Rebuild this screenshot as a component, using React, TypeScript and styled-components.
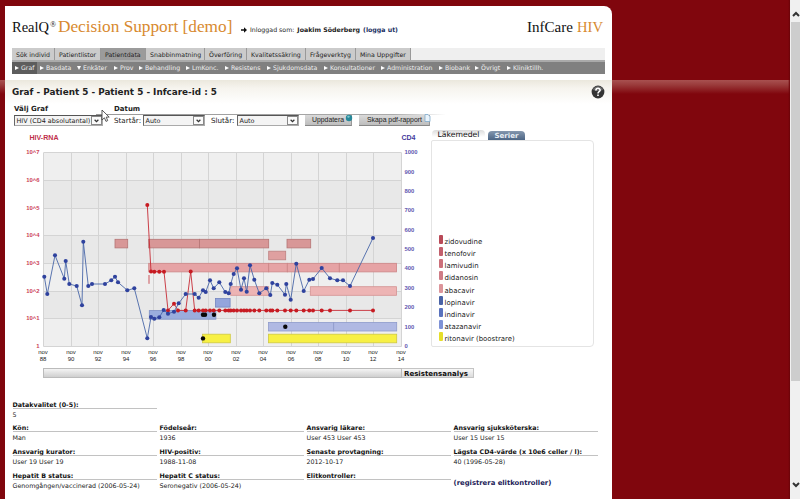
import React from "react";
import styled, { createGlobalStyle, css } from "styled-components";

const Global = createGlobalStyle`
  *, *::before, *::after { box-sizing: border-box; }
  html, body { margin: 0; padding: 0; overflow: hidden; }
  body { font-family: "DejaVu Sans", Verdana, sans-serif; color: #222; }
`;

const Window = styled.div`
  display: flex;
  width: 800px;
  height: 499px;
  overflow: hidden;
  background: #80060d;
`;

const Desk = styled.div`
  flex: 0 0 790px;
  padding: 6px 0 0 5px;
  background:
    linear-gradient(90deg, transparent 788px, #6a0308 790px),
    linear-gradient(#a85150, #9a3b3b 35%, #80060d) 0 80px / 100% 14px no-repeat,
    #80060d;
`;

const Sheet = styled.main`
  width: 607px;
  height: 500px;
  padding: 0 7px;
  border-top-right-radius: 8px;
  background: linear-gradient(#ebe8dd, #f6f4ee 8px, #ffffff 24px) 0 74px / 100% 24px no-repeat, #fff;
`;

const Header = styled.header`
  display: flex;
  height: 42px;
  padding-right: 2px;
  white-space: nowrap;
`;

const Brand = styled.div<{ $size: number; $color?: string; $width: number; $top?: number }>`
  flex: 0 0 ${(p) => p.$width}px;
  padding-top: ${(p) => p.$top ?? 11}px;
  font: ${(p) => p.$size}px/20px "Liberation Serif", serif;
  color: ${(p) => p.$color ?? "#111"};
`;

const Session = styled.div`
  flex: 1;
  display: flex;
  align-items: center;
  gap: 3px;
  height: 10px;
  margin: 19px 0 0 7px;
  font-size: 6.25px;
  line-height: 10px;
  svg { display: block; }
`;

const Link = styled.a`
  color: #1a2f63;
  font-weight: bold;
`;

const TabBar = styled.nav`
  display: flex;
  height: 14px;
  background: #efefef;
  border-bottom: 2px solid #aaa;
`;

const Tab = styled.a<{ $width: number; $active?: boolean }>`
  flex: 0 0 ${(p) => p.$width}px;
  height: 12px;
  padding-left: 4px;
  border-right: 1px solid #999;
  background: ${(p) => (p.$active ? "#9b9b9b" : "#cbcbcb")};
  font-size: 6.23px;
  line-height: 13px;
  color: #222;
  white-space: nowrap;
`;

const SubBar = styled.nav`
  display: flex;
  height: 12px;
  margin-bottom: 11px;
  background: #808080;
`;

const SubItem = styled.a<{ $width: number; $active?: boolean; $open?: boolean }>`
  flex: 0 0 ${(p) => p.$width}px;
  display: flex;
  align-items: center;
  gap: 2px;
  padding-left: 3px;
  background: ${(p) => (p.$active ? "#5d5d5d" : "transparent")};
  font-size: 6.22px;
  line-height: 12px;
  color: #f0f0f0;
  white-space: nowrap;
  &::before {
    content: "";
    border: 2px solid transparent;
    ${(p) =>
      p.$open
        ? css`border-width: 4px 2px 0; border-top-color: #fff;`
        : css`border-width: 2px 0 2px 4px; border-left-color: #fff;`}
  }
`;

const TitleRow = styled.div`
  display: flex;
  justify-content: space-between;
  height: 16px;
`;

const Title = styled.h1`
  margin: 0;
  font-size: 8.83px;
  line-height: 15px;
  white-space: nowrap;
`;

const Filters = styled.form`
  position: relative;
  display: grid;
  grid-template-columns: 100px 1fr;
  grid-template-rows: 10px 13px;
  height: 23px;
  margin: 3px 0 0 2px;
`;

const Rule = styled.div`
  position: absolute;
  left: 82px;
  top: 10px;
  width: 350px;
  height: 1px;
  background: linear-gradient(90deg, #999, #aaa 85%, transparent);
`;

const FilterLabel = styled.strong`
  font-size: 7px;
  line-height: 10px;
`;

const Controls = styled.div`
  display: flex;
  align-items: center;
  height: 11px;
  margin-top: 1px;
  font-size: 7.15px;
  line-height: 11px;
  white-space: nowrap;
`;

const ControlLabel = styled.label<{ $width: number }>`
  flex: 0 0 ${(p) => p.$width}px;
`;

const Select = styled.div<{ $width: number; $after?: number }>`
  flex: 0 0 ${(p) => p.$width}px;
  display: flex;
  justify-content: space-between;
  height: 11px;
  margin-right: ${(p) => p.$after ?? 0}px;
  padding-left: 1.5px;
  border: 1px solid #aaa;
  border-top-color: #555;
  border-left-color: #666;
  background: #f4f4f4;
  font-size: 6.45px;
  line-height: 10px;
`;

const Drop = styled.span`
  display: flex;
  align-items: center;
  justify-content: center;
  width: 11px;
  height: 9px;
  border: 1px solid #888;
  background: #fafafa;
`;

const Button = styled.div<{ $width: number; $after?: number; $pad: number }>`
  position: relative;
  flex: 0 0 ${(p) => p.$width}px;
  height: 11px;
  margin-right: ${(p) => p.$after ?? 0}px;
  padding-left: ${(p) => p.$pad}px;
  border-bottom: 1px solid #888;
  border-right: 1px solid #999;
  background: linear-gradient(#dadada, #bdbdbd);
  font: 6.86px/10px "Liberation Sans", Arial, sans-serif;
  svg { position: absolute; right: -2px; top: -1px; }
`;

const Pointer = styled.svg`
  position: absolute;
  left: 87px;
  top: 5px;
`;

const Charts = styled.section`
  display: flex;
  height: 235px;
  margin: 3px 0 0 8px;
`;

const Legend = styled.aside`
  width: 163px;
  margin-left: 1px;
`;

const LegendTabs = styled.div`
  display: flex;
  align-items: flex-end;
  gap: 3px;
  height: 10px;
  padding-left: 1px;
`;

const LegendTab = styled.div<{ $width: number; $active?: boolean }>`
  width: ${(p) => p.$width}px;
  height: ${(p) => (p.$active ? 10 : 9)}px;
  border-radius: 4px 4px 0 0;
  text-align: center;
  white-space: nowrap;
  ${(p) =>
    p.$active
      ? css`background: linear-gradient(#dcdcdc, #fff 70%); font-size: 7.71px; line-height: 10px; color: #111;`
      : css`background: linear-gradient(#8497ae, #4c6585); font-size: 7.05px; font-weight: bold; line-height: 9px; color: #e8eef5;`}
`;

const LegendBox = styled.ul`
  display: flex;
  flex-direction: column;
  justify-content: flex-end;
  height: 207px;
  margin: 0;
  padding: 0 0 2px 7px;
  border: 1px solid #e4e4e4;
  border-radius: 2px 4px 4px 2px;
  list-style: none;
`;

const LegendItem = styled.li<{ $color: string }>`
  display: flex;
  gap: 2px;
  height: 12.1px;
  font-size: 6.95px;
  line-height: 15px;
  white-space: nowrap;
  &::before {
    content: "";
    width: 3.5px;
    height: 9px;
    border-radius: 1px;
    background: ${(p) => p.$color};
  }
`;

const Resistance = styled.div`
  display: flex;
  height: 10px;
  margin: 3px 0 0 31px;
`;

const Track = styled.div`
  width: 359px;
  border: 1px solid #bbb;
  background: linear-gradient(#f4f4f4, #cfcfcf);
`;

const ResistanceButton = styled.div`
  width: 72px;
  padding-left: 2px;
  border: 1px solid #c4c4c4;
  border-left: 0;
  background: linear-gradient(#f8f8f8, #dcdcdc);
  font-size: 7.04px;
  font-weight: bold;
  line-height: 9px;
  color: #111;
`;

const Facts = styled.dl`
  display: grid;
  grid-template-columns: repeat(4, 144px);
  grid-auto-rows: 23.8px;
  column-gap: 3px;
  margin: 21.5px 0 0 0.5px;
`;

const Fact = styled.div<{ $alone?: boolean }>`
  font-size: 6.34px;
  white-space: nowrap;
  ${(p) => p.$alone && css`grid-column: 1 / -1; width: 144px;`}
  dt { height: 9px; border-bottom: 1px solid #c2c2c2; font-weight: bold; line-height: 9px; color: #111; }
  dd { margin: 0; line-height: 11px; }
`;

const Register = styled.a`
  padding-top: 7.5px;
  font-size: 6.85px;
  font-weight: bold;
  line-height: 10px;
  color: #221c58;
  white-space: nowrap;
`;

const Scrollbar = styled.div`
  flex: 0 0 10px;
  display: flex;
  flex-direction: column;
  align-items: center;
  padding: 10px 0 10px 1px;
  background: #f0f0f0;
  svg { flex: none; }
`;

const Thumb = styled.div`
  width: 9px;
  height: 359px;
  margin: 4px 0 auto;
  background: #cdcdcd;
`;

const tabs: [string, number][] = [
  ["Sök individ", 43], ["Patientlistor", 46], ["Patientdata", 45], ["Snabbinmatning", 59],
  ["Överföring", 42], ["Kvalitetssäkring", 59], ["Frågeverktyg", 50], ["Mina Uppgifter", 55],
];

const subItems: [string, number][] = [
  ["Graf", 25], ["Basdata", 37], ["Enkäter", 37], ["Prov", 25], ["Behandling", 47],
  ["LmKonc.", 39], ["Resistens", 42], ["Sjukdomsdata", 57], ["Konsultationer", 57],
  ["Administration", 58], ["Biobank", 36], ["Övrigt", 32], ["Kliniktillh.", 40],
];

const drugs: [string, string][] = [
  ["zidovudine", "#b94a58"], ["tenofovir", "#c25f6c"], ["lamivudin", "#cc6f79"],
  ["didanosin", "#cf7d86"], ["abacavir", "#dc959b"], ["lopinavir", "#4a63a6"],
  ["indinavir", "#5a72bd"], ["atazanavir", "#7f92d6"], ["ritonavir (boostrare)", "#e6de2a"],
];

const facts: [string, string][] = [
  ["Datakvalitet (0-5):", "5"],
  ["Kön:", "Man"], ["Födelseår:", "1936"], ["Ansvarig läkare:", "User 453 User 453"], ["Ansvarig sjuksköterska:", "User 15 User 15"],
  ["Ansvarig kurator:", "User 19 User 19"], ["HIV-positiv:", "1988-11-08"], ["Senaste provtagning:", "2012-10-17"], ["Lägsta CD4-värde (x 10e6 celler / l):", "40 (1996-05-28)"],
  ["Hepatit B status:", "Genomgången/vaccinerad (2006-05-24)"], ["Hepatit C status:", "Seronegativ (2006-05-24)"], ["Elitkontroller:", ""],
];

type Point = [number, number];

const cd4: Point[] = [
  [44.3, 276.7], [47.3, 294], [55, 255.3], [64.3, 278.7], [65.7, 261], [69.3, 284], [76.7, 286], [82, 305.3],
  [83.3, 241.7], [88.3, 286], [92, 284], [105, 284], [111.3, 280.3], [115, 276.7], [118, 282.3], [127.3, 290.3],
  [134.3, 288.3], [147.3, 338.3], [151, 317], [154.3, 318.7], [159.3, 317.3], [163.7, 310], [168, 313.7],
  [174, 311.7], [178.7, 303.3], [185.7, 294], [194.7, 294], [198.7, 297.7], [203, 290.3], [205.7, 292],
  [210, 280.3], [213.7, 288.3], [219.3, 282.3], [225.3, 292], [228.7, 293.3], [230.7, 284], [233.7, 274],
  [237, 268.3], [241, 289.7], [244, 278.3], [246.7, 291.7], [250, 265.3], [254.3, 279.7], [259.3, 293.3],
  [266.3, 288.3], [270.3, 295], [272.3, 283], [277.3, 284.7], [285, 294.7], [286.3, 284], [290.7, 299.7],
  [296.3, 263.7], [303.7, 291], [309.3, 279.7], [313, 279], [321.7, 268], [330, 278.3], [337.3, 280.3],
  [343, 280.3], [350, 286], [373, 238],
];

const flat = (xs: number[]): Point[] => xs.map((x) => [x, 310.4]);

const rna: Point[] = [
  [147.3, 205], [151, 271.5], [154.3, 271.7], [159.3, 271.7], [164, 271.7], [168, 310.4], [174, 303.7],
  [178, 310.4], [185.7, 310.4], [190.7, 271.5],
  ...flat([194.7, 198.7, 203, 205.7, 210, 213.7, 219.3, 225.3, 228.7, 230.7, 233.7, 237, 241, 244, 246.7, 250,
    254.3, 259.3, 266.3, 270.3, 272.3, 277.3, 285, 290.7, 296.3, 303.7, 309.3, 313, 321.7, 330, 350, 373]),
];

const marks: Point[] = [[203, 338.4], [203, 314.7], [205, 314.7], [214, 314.7], [285.3, 326.7]];

/* x, y, width, fill, stroke */
const courses: [number, number, number, string, string][] = [
  [115, 239.3, 12.7, "#d89797", "#b57575"], [148.7, 239.3, 50.7, "#d89797", "#b57575"],
  [199.4, 239.3, 69.3, "#d89797", "#b57575"], [287, 239.3, 23.7, "#d89797", "#b57575"],
  [268.7, 251.2, 17, "#dfa0a0", "#be8080"],
  [148.7, 263.3, 120, "#e6a3a5", "#cc8587"], [268.7, 263.3, 18.6, "#e6a3a5", "#cc8587"],
  [287.3, 263.3, 52, "#e6a3a5", "#cc8587"], [339.3, 263.3, 57.3, "#e6a3a5", "#cc8587"],
  [230.7, 286.7, 38, "#edb4b4", "#d49393"], [310.3, 286.7, 86.3, "#edb4b4", "#d49393"],
  [215.5, 298.5, 14.6, "#94a5dc", "#7385c0"], [149.3, 310.6, 66.6, "#9aaddd", "#7e90c4"],
  [268.5, 322.4, 65.2, "#b0b9e3", "#8f9bcb"], [333.7, 322.4, 63, "#b0b9e3", "#8f9bcb"],
  [202.5, 334.2, 27.8, "#f7f044", "#cfc842"], [268.5, 334.2, 128.2, "#f7f044", "#cfc842"],
];

const years = ["88", "90", "92", "94", "96", "98", "00", "02", "04", "06", "08", "10", "12", "14"];
const path = (pts: Point[]) => pts.map(([x, y]) => `${x},${y}`).join(" ");
const SANS = '"Liberation Sans", Arial, sans-serif';

function Chart() {
  return (
    <svg width="410" height="236" viewBox="20 130 410 236" fontFamily={SANS} fontSize="5.9">
      <text x="29.5" y="139.6" fontSize="7.05" fontWeight="bold" fill="#c0304a">HIV-RNA</text>
      <text x="401.5" y="139.6" fontSize="7" fontWeight="bold" fill="#43399c">CD4</text>
      {[0, 1, 2, 3, 4, 5, 6].map((i) => (
        <rect key={i} x="43.5" y={152.7 + i * 27.66} width="358" height="27.66" fill={i % 2 ? "#e8e8e8" : "#efefef"} />
      ))}
      {[0, 1, 2, 3, 4, 5, 6, 7].map((i) => (
        <g key={i}>
          <line x1="43.5" x2="401.5" y1={Math.floor(152.7 + i * 27.66) + 0.5} y2={Math.floor(152.7 + i * 27.66) + 0.5} stroke="#d4d4d4" />
          <text x="39.5" y={154.2 + i * 27.66} textAnchor="end" fontWeight="bold" fill="#cc4259">
            {i === 7 ? "1" : `10^${7 - i}`}
          </text>
        </g>
      ))}
      {years.map((year, i) => {
        const x = Math.floor(43.5 + i * 27.54);
        return (
          <g key={year} textAnchor="middle" fill="#222">
            <line x1={x + 0.5} x2={x + 0.5} y1="152.7" y2="346.5" stroke="#d4d4d4" />
            <text x={x} y="354" fontSize="6">nov</text>
            <text x={x} y="360.8" fontSize="6">{year}</text>
          </g>
        );
      })}
      {[1000, 900, 800, 700, 600, 500, 400, 300, 200, 100, 0].map((v, i) => (
        <text key={v} x="404.5" y={154.2 + i * 19.38} fontWeight="bold" fill="#6258b0">{v}</text>
      ))}
      {courses.map(([x, y, w, fill, stroke]) => (
        <rect key={`${x}-${y}`} x={x} y={y} width={w} height="8.6" fill={fill} stroke={stroke} strokeWidth=".8" />
      ))}
      <rect x="148.2" y="275" width="1.6" height="8.8" fill="#d98f93" />
      <polyline points={path(rna)} fill="none" stroke="#c62b35" strokeWidth=".9" />
      <polyline points={path(cd4)} fill="none" stroke="#4866a8" strokeWidth=".9" />
      {rna.map(([x, y]) => <circle key={x} cx={x} cy={y} r="2" fill="#c71b22" />)}
      {cd4.map(([x, y]) => <circle key={x} cx={x} cy={y} r="2.05" fill="#2f429e" />)}
      {marks.map(([x, y]) => <circle key={`${x}${y}`} cx={x} cy={y} r="2.2" fill="#080808" />)}
    </svg>
  );
}

const Chevron = ({ up, size = 5 }: { up?: boolean; size?: number }) => (
  <svg width={size} height={size === 5 ? 4 : 8} viewBox="0 0 8 6" fill="none" stroke="#333" strokeWidth="2">
    <path d={up ? "M1 5 4 2 7 5" : "M1 1 4 4 7 1"} />
  </svg>
);

export default function App() {
  return (
    <Window>
      <Global />
      <Desk>
        <Sheet>
          <Header>
            <Brand $size={14.48} $width={38}>RealQ</Brand>
            <Brand $size={8} $width={8} $top={9}>®</Brand>
            <Brand $size={17.25} $width={176} $color="#d88a30">Decision Support [demo]</Brand>
            <Session>
              <svg width="6" height="6" viewBox="0 0 6 6"><path d="M0 2.2h3V.3L6 3 3 5.7V3.8H0z" fill="#111" /></svg>
              <span>Inloggad som:</span>
              <strong>Joakim Söderberg</strong>
              <Link>(logga ut)</Link>
            </Session>
            <Brand $size={15.05} $width={50}>InfCare</Brand>
            <Brand $size={14.6} $width={26} $color="#d88a30">HIV</Brand>
          </Header>
          <TabBar>
            {tabs.map(([name, width]) => (
              <Tab key={name} $width={width} $active={name === "Patientdata"}>{name}</Tab>
            ))}
          </TabBar>
          <SubBar>
            {subItems.map(([name, width]) => (
              <SubItem key={name} $width={width} $active={name === "Graf"} $open={name === "Enkäter"}>{name}</SubItem>
            ))}
          </SubBar>
          <TitleRow>
            <Title>Graf - Patient 5 - Patient 5 - Infcare-id : 5</Title>
            <svg width="14" height="14" viewBox="0 0 14 14">
              <circle cx="7" cy="7" r="6.4" fill="#343434" />
              <path d="M2 5a5.2 5.2 0 0 1 10 0Q7 7 2 5z" fill="#666" />
              <path d="M4.9 5.4C4.9 2.6 9.2 2.7 9.1 5.2 9 6.7 7 6.6 7 8.4M7 9.5v1.6" fill="none" stroke="#fff" strokeWidth="1.6" />
            </svg>
          </TitleRow>
          <Filters>
            <FilterLabel>Välj Graf</FilterLabel>
            <FilterLabel>Datum</FilterLabel>
            <Rule />
            <Controls>
              <Select $width={89}>HIV (CD4 absolutantal)<Drop><Chevron /></Drop></Select>
            </Controls>
            <Controls>
              <ControlLabel $width={29}>Startår:</ControlLabel>
              <Select $width={62} $after={6}>Auto<Drop><Chevron /></Drop></Select>
              <ControlLabel $width={26}>Slutår:</ControlLabel>
              <Select $width={62} $after={6}>Auto<Drop><Chevron /></Drop></Select>
              <Button $width={47} $after={7} $pad={7}>
                Uppdatera
                <svg width="8" height="8" viewBox="0 0 8 8"><circle cx="4" cy="4" r="3.2" fill="#27899a" /><path d="M2 2.5 4 1.5 5 3 3 4z" fill="#7cc5cf" /></svg>
              </Button>
              <Button $width={71} $pad={8}>
                Skapa pdf-rapport
                <svg width="7" height="8" viewBox="0 0 7 8"><path d="M1 .5h3L6 2.5v5H1z" fill="#e9f3fb" stroke="#7ea9cc" strokeWidth=".8" /></svg>
              </Button>
            </Controls>
            <Pointer width="9" height="14" viewBox="0 0 9 14">
              <path d="M1 1v10l2.4-2.2L5 12.4l1.7-.8L5.2 8.1h3z" fill="#fff" stroke="#444" strokeWidth=".9" />
            </Pointer>
          </Filters>
          <Charts>
            <Chart />
            <Legend>
              <LegendTabs>
                <LegendTab $width={53} $active>Läkemedel</LegendTab>
                <LegendTab $width={37}>Serier</LegendTab>
              </LegendTabs>
              <LegendBox>
                {drugs.map(([name, color]) => <LegendItem key={name} $color={color}>{name}</LegendItem>)}
              </LegendBox>
            </Legend>
          </Charts>
          <Resistance>
            <Track />
            <ResistanceButton>Resistensanalys</ResistanceButton>
          </Resistance>
          <Facts>
            {facts.map(([label, value], i) => (
              <Fact key={label} $alone={i === 0}><dt>{label}</dt><dd>{value}</dd></Fact>
            ))}
            <Register>(registrera elitkontroller)</Register>
          </Facts>
        </Sheet>
      </Desk>
      <Scrollbar>
        <Chevron up size={8} />
        <Thumb />
        <Chevron size={8} />
      </Scrollbar>
    </Window>
  );
}
